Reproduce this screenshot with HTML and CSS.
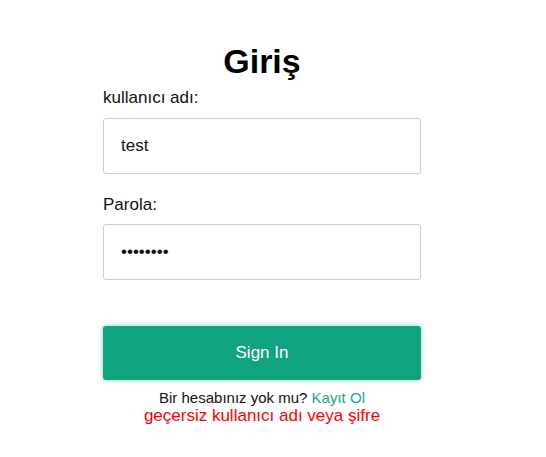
FILE: index.html
```html
<!DOCTYPE html>
<html lang="tr">
<head>
<meta charset="utf-8">
<title>Giriş</title>
<link rel="stylesheet" href="styles.css">
</head>
<body>
<div class="login">
  <h1 class="title">Giriş</h1>
  <form class="form">
    <label class="label" for="u">kullanıcı adı:</label>
    <input class="field" id="u" type="text" value="test">
    <label class="label label-pass" for="p">Parola:</label>
    <input class="field" id="p" type="password" value="12345678">
    <button class="btn" type="button">Sign In</button>
  </form>
  <p class="signup">Bir hesabınız yok mu? <a class="link" href="#">Kayıt Ol</a></p>
  <p class="error">geçersiz kullanıcı adı veya şifre</p>
</div>
</body>
</html>
```
FILE: styles.css
```css
html, body {
  margin: 0;
  padding: 0;
  background: #fff;
}
body {
  font-family: "Liberation Sans", Arial, sans-serif;
  font-size: 17px;
  color: #111;
}
.login {
  width: 318px;
  margin-left: 103px;
  padding-top: 42px;
  display: flex;
  flex-direction: column;
}
.title {
  margin: 0;
  font-size: 34px;
  line-height: 38px;
  font-weight: bold;
  text-align: center;
  color: #000;
}
.form {
  display: flex;
  flex-direction: column;
  margin-top: 8px;
}
.label {
  font-size: 17px;
  line-height: 19px;
  margin-bottom: 11px;
}
.label-pass {
  margin-top: 21px;
  margin-bottom: 10px;
}
.field {
  box-sizing: border-box;
  height: 56px;
  width: 100%;
  margin: 0;
  padding: 0 17px;
  border: 1px solid #cccccc;
  border-radius: 3px;
  font-family: "Liberation Sans", Arial, sans-serif;
  font-size: 17px;
  color: #111;
  background: #fff;
  outline: none;
}
.btn {
  box-sizing: border-box;
  height: 54px;
  width: 100%;
  margin-top: 46px;
  border: none;
  border-radius: 3px;
  background: #10a37f;
  color: #fff;
  font-family: "Liberation Sans", Arial, sans-serif;
  font-size: 17px;
  box-shadow: 0 0 5px rgba(16, 163, 127, 0.55);
}
.signup {
  margin: 9px 0 0;
  font-size: 15px;
  line-height: 17px;
  text-align: center;
  color: #111;
}
.link {
  color: #1aa58a;
  text-decoration: none;
}
.error {
  margin: 0;
  font-size: 17px;
  line-height: 19px;
  text-align: center;
  color: #ff0000;
}
```
